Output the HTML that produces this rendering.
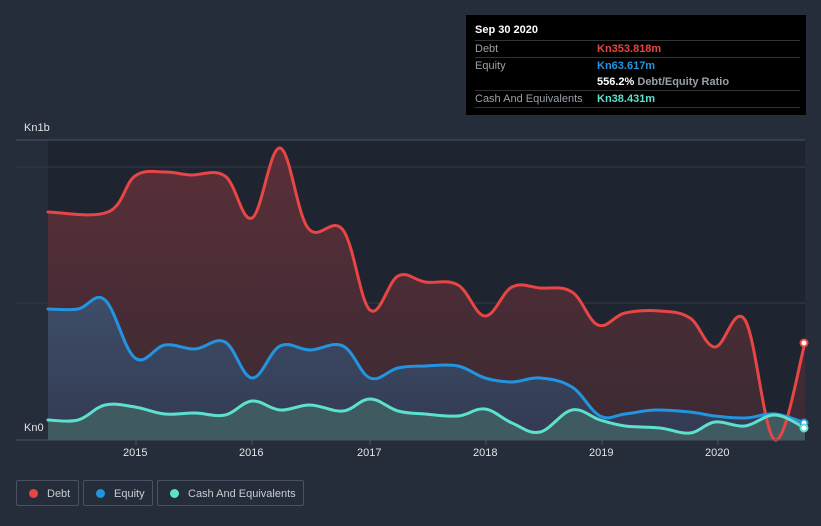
<!DOCTYPE html>
<html><head><style>
body{margin:0;width:821px;height:526px;background:#262d3a;font-family:"Liberation Sans",sans-serif;overflow:hidden;position:relative}
.tt{position:absolute;left:466px;top:15px;width:340px;height:100px;background:#000;}
.tt .h{position:absolute;left:9px;top:9px;color:#fff;font-weight:bold;font-size:11px}
.row{position:absolute;left:9px;width:325px;font-size:11px;color:#9aa0a8;border-top:1px solid #333;height:16px;line-height:16px}
.row span{position:absolute;left:122px;font-weight:bold}
.lg{position:absolute;top:480px;height:26px;border:1px solid #4a5160;border-radius:2px;color:#c8ccd2;font-size:11px;line-height:26px;box-sizing:border-box}
.lg i{display:inline-block;width:9px;height:9px;border-radius:50%;margin:0 9px 0 12px;vertical-align:-1px}
.ax{position:absolute;color:#e0e3e8;font-size:11px}
</style></head><body>
<svg id="s" width="821" height="526" style="position:absolute;left:0;top:0">
<defs>
<linearGradient id="gd" x1="0" y1="0" x2="0" y2="1"><stop offset="0" stop-color="#5a2f38"/><stop offset="1" stop-color="#3a2a33"/></linearGradient>
<linearGradient id="ge" x1="0" y1="0" x2="0" y2="1"><stop offset="0" stop-color="#3e4d68"/><stop offset="1" stop-color="#323a52"/></linearGradient>
</defs>
<rect x="48" y="140" width="757" height="300" fill="#1f2530"/>
<line x1="16" y1="140" x2="805" y2="140" stroke="#4a5160"/>
<line x1="16" y1="167" x2="805" y2="167" stroke="#343b48"/>
<line x1="16" y1="303" x2="805" y2="303" stroke="#343b48"/>
<polygon class="sm" fill="url(#gd)" points="48,440 48,212 108,212 135,176 165,172 190,175 225,176 252,218 280,148 308,228 343,230 370,310 398,276 425,282 458,285 485,316 512,287 540,288 572,292 598,325 625,313 660,311 690,318 715,347 745,320 775,440 805,343 805,440"/>
<polygon class="sm" fill="url(#ge)" points="48,440 48,309 78,309 105,300 135,358 165,345 195,349 225,342 252,378 280,346 310,350 343,346 370,378 398,368 425,366 458,366 485,378 512,382 540,378 572,387 600,416 625,414 655,410 690,412 715,416 745,418 775,414 805,423 805,440"/>
<polygon class="sm" fill="#3f5a60" points="48,440 48,420 78,420 105,405 135,407 165,414 195,413 225,415 252,401 280,410 310,405 343,411 370,399 398,411 425,414 458,416 485,409 512,423 540,432 572,410 600,420 625,426 660,428 690,433 715,422 745,426 775,415 805,428 805,440"/>
<g fill="none" stroke-width="3" stroke-linejoin="round" stroke-linecap="round">
<polyline class="sm" stroke="#e84545" points="48,212 108,212 135,176 165,172 190,175 225,176 252,218 280,148 308,228 343,230 370,310 398,276 425,282 458,285 485,316 512,287 540,288 572,292 598,325 625,313 660,311 690,318 715,347 745,320 775,440 805,343"/>
<polyline class="sm" stroke="#2394e0" points="48,309 78,309 105,300 135,358 165,345 195,349 225,342 252,378 280,346 310,350 343,346 370,378 398,368 425,366 458,366 485,378 512,382 540,378 572,387 600,416 625,414 655,410 690,412 715,416 745,418 775,414 805,423"/>
<polyline class="sm" stroke="#5de0cc" points="48,420 78,420 105,405 135,407 165,414 195,413 225,415 252,401 280,410 310,405 343,411 370,399 398,411 425,414 458,416 485,409 512,423 540,432 572,410 600,420 625,426 660,428 690,433 715,422 745,426 775,415 805,428"/>
</g>
<line x1="16" y1="440" x2="805" y2="440" stroke="#4a5160"/>
<g stroke="#4a5160"><line x1="136" y1="440" x2="136" y2="445"/><line x1="252" y1="440" x2="252" y2="445"/><line x1="370" y1="440" x2="370" y2="445"/><line x1="486" y1="440" x2="486" y2="445"/><line x1="602" y1="440" x2="602" y2="445"/><line x1="718" y1="440" x2="718" y2="445"/></g>
<circle cx="804" cy="343" r="3.5" fill="#fff" stroke="#e84545" stroke-width="2"/>
<circle cx="804" cy="423" r="3.5" fill="#fff" stroke="#2394e0" stroke-width="2"/>
<circle cx="804" cy="428" r="3.5" fill="#fff" stroke="#5de0cc" stroke-width="2"/>
</svg>
<script>
(function(){
var NS="http://www.w3.org/2000/svg";
document.querySelectorAll(".sm").forEach(function(el){
 var pts=el.getAttribute("points").trim().split(/\s+/).map(function(p){return p.split(",").map(Number);});
 var poly=el.tagName.toLowerCase()==="polygon";
 var core=poly?pts.slice(1,pts.length-1):pts;
 var d="M"+core[0][0]+","+core[0][1];
 for(var i=0;i<core.length-1;i++){
  var p0=core[Math.max(i-1,0)],p1=core[i],p2=core[i+1],p3=core[Math.min(i+2,core.length-1)];
  var t=0.18;
  var c1x=p1[0]+(p2[0]-p0[0])*t,c1y=p1[1]+(p2[1]-p0[1])*t;
  var c2x=p2[0]-(p3[0]-p1[0])*t,c2y=p2[1]-(p3[1]-p1[1])*t;
  d+=" C"+c1x+","+c1y+" "+c2x+","+c2y+" "+p2[0]+","+p2[1];
 }
 if(poly){d="M"+pts[0][0]+","+pts[0][1]+" L"+d.slice(1)+" L"+pts[pts.length-1][0]+","+pts[pts.length-1][1]+" Z";}
 var p=document.createElementNS(NS,"path");
 for(var k=0;k<el.attributes.length;k++){var a=el.attributes[k];if(a.name!=="points"&&a.name!=="class")p.setAttribute(a.name,a.value);}
 p.setAttribute("d",d);
 el.parentNode.replaceChild(p,el);
});
})();
</script>
<div class="ax" style="left:24px;top:122px">Kn1b</div>
<div class="ax" style="left:24px;top:422px">Kn0</div>
<div class="ax" style="left:123px;top:447px">2015</div>
<div class="ax" style="left:239px;top:447px">2016</div>
<div class="ax" style="left:357px;top:447px">2017</div>
<div class="ax" style="left:473px;top:447px">2018</div>
<div class="ax" style="left:589px;top:447px">2019</div>
<div class="ax" style="left:705px;top:447px">2020</div>
<div class="tt">
<div class="h">Sep 30 2020</div>
<div class="row" style="top:25px">Debt<span style="color:#e84545">Kn353.818m</span></div>
<div class="row" style="top:42px">Equity<span style="color:#2394e0">Kn63.617m</span></div>
<div class="row" style="top:59px;border-top:none"><span style="color:#fff">556.2% <b style="color:#9aa0a8">Debt/Equity Ratio</b></span></div>
<div class="row" style="top:75px">Cash And Equivalents<span style="color:#5de0cc">Kn38.431m</span></div>
<div class="row" style="top:92px;height:0"></div>
</div>
<div class="lg" style="left:16px;width:63px"><i style="background:#e84545"></i>Debt</div>
<div class="lg" style="left:83px;width:70px"><i style="background:#2394e0"></i>Equity</div>
<div class="lg" style="left:157px;width:147px"><i style="background:#5de0cc"></i>Cash And Equivalents</div>
</body></html>
